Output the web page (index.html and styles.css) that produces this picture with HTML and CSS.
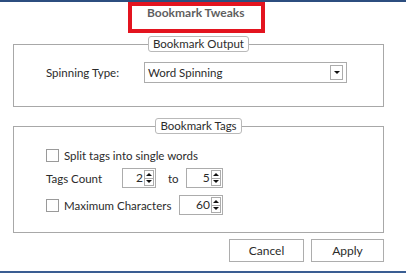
FILE: index.html
```html
<!DOCTYPE html>
<html lang="en">
<head>
    <meta charset="UTF-8">
    <meta name="viewport" content="width=device-width, initial-scale=1.0">
    <title>Bookmark Tweaks</title>
    <link rel="stylesheet" href="styles.css">
</head>
<body>
    <div class="window">
        <div class="topbar"></div>

        <div class="caption">
            <div class="caption-box">Bookmark Tweaks</div>
        </div>

        <fieldset class="group group-output">
            <legend>Bookmark Output</legend>
            <div class="row">
                <span class="label label-type">Spinning Type:</span>
                <div class="combo">
                    <span class="combo-value">Word Spinning</span>
                    <span class="combo-btn"><span class="arrow"></span></span>
                </div>
            </div>
        </fieldset>

        <fieldset class="group group-tags">
            <legend>Bookmark Tags</legend>
            <div class="row row-split">
                <span class="check"></span>
                <span class="label">Split tags into single words</span>
            </div>
            <div class="row row-count">
                <span class="label label-count">Tags Count</span>
                <div class="spin spin-small">
                    <span class="spin-value">2</span>
                    <span class="spin-btns"><span class="up"></span><span class="down"></span></span>
                </div>
                <span class="label label-to">to</span>
                <div class="spin spin-mid">
                    <span class="spin-value">5</span>
                    <span class="spin-btns"><span class="up"></span><span class="down"></span></span>
                </div>
            </div>
            <div class="row row-max">
                <span class="check"></span>
                <span class="label label-max">Maximum Characters</span>
                <div class="spin spin-wide">
                    <span class="spin-value">60</span>
                    <span class="spin-btns"><span class="up"></span><span class="down"></span></span>
                </div>
            </div>
        </fieldset>

        <div class="actions">
            <button class="btn btn-cancel">Cancel</button>
            <button class="btn btn-apply">Apply</button>
        </div>

        <div class="bottombar"></div>
    </div>
</body>
</html>
```

FILE: styles.css
```css
body {
    margin: 0;
    font-family: 'Lato', 'Open Sans', sans-serif;
    font-size: 11.5px;
    color: #2b2b2b;
    background: #fff;
}

.window {
    width: 406px;
    height: 273px;
    display: flex;
    flex-direction: column;
    overflow: hidden;
}

.topbar {
    height: 2px;
    background: #2c4e7f;
}

.caption {
    display: flex;
}

.caption-box {
    margin-left: 128px;
    width: 137px;
    height: 31px;
    box-sizing: border-box;
    border: 4px solid #e3141f;
    padding: 0 0 0 15px;
    font-size: 12px;
    font-weight: bold;
    color: #5f5f5f;
    line-height: 13px;
}

.group {
    margin: 3px 22px 0 13px;
    width: 371px;
    box-sizing: border-box;
    border: 1px solid #a8a8a8;
    padding: 0;
    min-width: 0;
}

.group legend {
    margin: 0 auto;
    padding: 0 4px;
    height: 16px;
    box-sizing: border-box;
    border: 1px solid #b9b9b9;
    border-radius: 3px;
    line-height: 14px;
    background: #fff;
    color: #2b2b2b;
}

.row {
    display: flex;
    align-items: center;
    padding-left: 32px;
}

.label {
    white-space: nowrap;
}

/* Bookmark Output */
.group-output {
    padding-top: 10px;
    padding-bottom: 23px;
}

.label-type {
    width: 98px;
}

.combo {
    width: 203px;
    height: 21px;
    box-sizing: border-box;
    border: 1px solid #acacac;
    display: flex;
    align-items: center;
    justify-content: space-between;
    padding: 0 3px 0 3px;
}

.combo-btn {
    width: 13px;
    height: 15px;
    box-sizing: border-box;
    border: 1px solid #acacac;
    display: flex;
    align-items: center;
    justify-content: center;
}

.arrow {
    width: 0;
    height: 0;
    border-left: 3px solid transparent;
    border-right: 3px solid transparent;
    border-top: 3px solid #111;
}

/* Bookmark Tags */
.group-tags {
    margin-top: 11px;
    padding-top: 11px;
    padding-bottom: 17px;
}

.row-split {
    height: 20px;
}

.row-count {
    height: 20px;
    margin-top: 3px;
}

.row-max {
    height: 20px;
    margin-top: 7px;
}

.check {
    width: 11px;
    height: 11px;
    border: 1px solid #9a9a9a;
    background: #fff;
    margin-right: 5px;
}

.label-count {
    width: 76px;
}

.label-to {
    margin: 0 7px 0 12px;
}

.label-max {
    width: 115px;
}

.spin {
    height: 20px;
    box-sizing: border-box;
    border: 1px solid #acacac;
    display: flex;
    align-items: stretch;
    padding: 1px;
}

.spin-small {
    width: 34px;
}

.spin-mid {
    width: 37px;
}

.spin-wide {
    width: 44px;
}

.spin-value {
    flex: 1;
    text-align: right;
    line-height: 16px;
    padding-right: 1px;
    font-size: 12px;
}

.spin-btns {
    width: 10px;
    display: flex;
    flex-direction: column;
    border: 1px solid #acacac;
    box-sizing: border-box;
}

.spin-btns span {
    flex: 1;
    display: flex;
    align-items: center;
    justify-content: center;
}

.spin-btns .up {
    border-bottom: 1px solid #acacac;
}

.spin-btns .up::after {
    content: "";
    border-left: 3px solid transparent;
    border-right: 3px solid transparent;
    border-bottom: 3px solid #111;
}

.spin-btns .down::after {
    content: "";
    border-left: 3px solid transparent;
    border-right: 3px solid transparent;
    border-top: 3px solid #111;
}

/* Botones */
.actions {
    display: flex;
    justify-content: flex-end;
    gap: 7px;
    margin: 6px 22px 0 0;
}

.btn {
    height: 23px;
    box-sizing: border-box;
    border: 1px solid #adadad;
    background: #fff;
    font-family: inherit;
    font-size: 12px;
    color: #2b2b2b;
    padding: 0;
}

.btn-cancel {
    width: 75px;
}

.btn-apply {
    width: 73px;
}

.bottombar {
    margin-top: auto;
    height: 2px;
    background: #3a5d92;
}
```
